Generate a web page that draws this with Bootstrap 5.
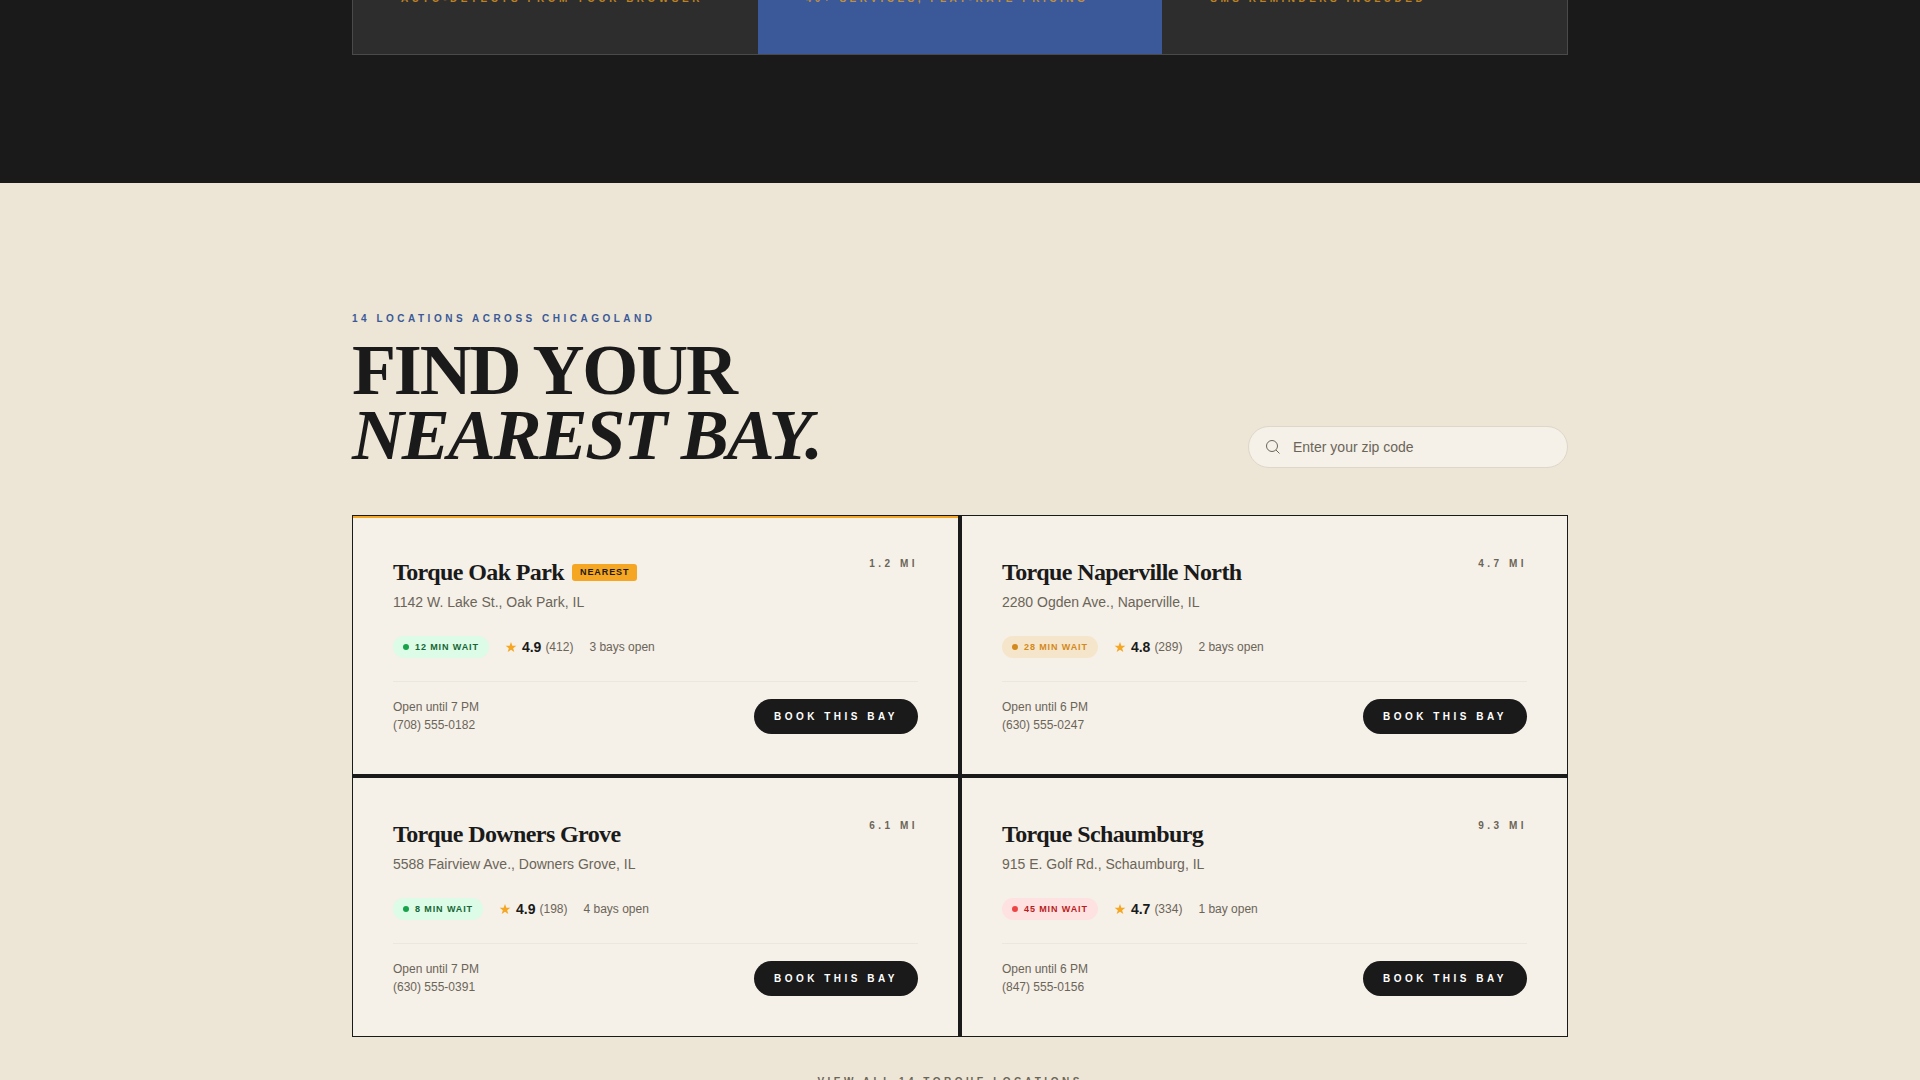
<!DOCTYPE html>
<html lang="en">
<head>
<meta charset="utf-8">
<meta name="viewport" content="width=device-width, initial-scale=1">
<title>Torque – Find your nearest bay</title>
<link href="https://cdn.jsdelivr.net/npm/bootstrap@5.3.0/dist/css/bootstrap.min.css" rel="stylesheet">
<style>
:root{--ink:#1a1a1a;--cream:#f5f0e8;--sand:#ede6d6;--amber:#f5a623;--blue:#3b5998;--muted-ink:#6b6558}
body{font-family:"Liberation Sans",Arial,sans-serif;color:var(--ink);background:var(--sand);overflow:hidden;height:100vh}
.wrap{max-width:1280px;padding:0 32px;margin:0 auto}
.steps-section{background:var(--ink);margin-top:-9px;padding-bottom:128px}
.steps{border:1px solid #4a4a4a;border-top:0;background:#2d2d2d}
.step{padding:0 48px 48px}
.step.current{background:var(--blue)}
.caps{font-size:10px;line-height:15px;font-weight:700;letter-spacing:.35em;text-transform:uppercase}
.step .caps{color:var(--amber);opacity:.7}
.find-section{padding-top:128px}
.find-head{margin-bottom:47px}
.eyebrow{color:var(--blue);margin-bottom:12px}
.headline{font-family:"Liberation Serif","Times New Roman",serif;font-size:72px;line-height:65px;font-weight:700;letter-spacing:-.03em;text-transform:uppercase}
.zip{width:320px;border:1px solid #ddd7c8;border-radius:21px;background:var(--cream);padding:0 17px;height:42px;gap:13px}
.zip input{border:0;outline:0;background:transparent;font-size:14px;line-height:20px;padding:0;min-width:0;color:var(--ink)}
.zip input::placeholder{color:var(--muted-ink);opacity:1}
.bays{display:grid;grid-template-columns:1fr 1fr;gap:4px;background:var(--ink);border:1px solid var(--ink)}
.bay{background:var(--cream);padding:40px;position:relative}
.bay.closest::before{content:"";position:absolute;left:0;right:0;top:0;height:2px;background:var(--amber)}
.bay-name{font-family:"Liberation Serif","Times New Roman",serif;font-size:24px;line-height:32px;font-weight:700;letter-spacing:-.025em}
.tag{font-size:9px;line-height:13px;font-weight:700;letter-spacing:.1em;background:var(--amber);border-radius:3px;padding:2px 8px}
.addr{font-size:14px;line-height:20px;color:var(--muted-ink)}
.dist{color:var(--muted-ink)}
.wait{font-size:9px;line-height:14px;font-weight:700;letter-spacing:.1em;border-radius:11px;padding:4px 10px;gap:6px}
.wait i{width:6px;height:6px;border-radius:50%;background:currentColor}
.wait-short{background:#dcfce7;color:#166534}.wait-short i{background:#16a34a}
.wait-mid{background:#f5e6cb;color:#d4891c}
.wait-long{background:#fee2e2;color:#b91c1c}.wait-long i{background:#ef4444}
.stats{gap:16px;margin-top:24px;font-size:12px;line-height:20px;color:var(--muted-ink)}
.score{font-size:14px;color:var(--ink)}
.foot{border-top:1px solid #ebe6de;margin-top:23px;padding-top:16px;font-size:12px;line-height:18px;color:var(--muted-ink)}
.foot a{color:inherit;text-decoration:none}
.book{background:var(--ink);color:#fff;border:0;border-radius:18px;padding:10px 20px}
.all-row{margin-top:37px}
.all-link{color:var(--muted-ink);text-decoration:none}
</style>
</head>
<body>
<section class="steps-section">
  <div class="wrap">
    <div class="steps row row-cols-3 g-0">
      <div class="col step"><div class="caps">Auto-detects from your browser</div></div>
      <div class="col step current"><div class="caps">40+ services, flat-rate pricing</div></div>
      <div class="col step"><div class="caps">SMS reminders included</div></div>
    </div>
  </div>
</section>
<section class="find-section">
  <div class="wrap">
    <div class="find-head d-flex justify-content-between align-items-end">
      <div>
        <div class="caps eyebrow">14 locations across Chicagoland</div>
        <h2 class="headline mb-0">Find your<br><em>nearest bay.</em></h2>
      </div>
      <div class="zip d-flex align-items-center">
        <svg width="14" height="14" viewBox="0 0 14 14" fill="none" stroke="#6b6558" aria-hidden="true"><circle cx="6" cy="6" r="5.5"/><path d="M10 10l3.500 3.500"/></svg>
        <input class="flex-grow-1" type="text" aria-label="Zip code" placeholder="Enter your zip code">
      </div>
    </div>
    <div class="bays">
      <article class="bay closest">
        <div class="d-flex justify-content-between">
          <div><div class="d-flex align-items-center gap-2 mb-1"><h3 class="bay-name mb-0">Torque Oak Park</h3><span class="tag">NEAREST</span></div><div class="addr">1142 W. Lake St., Oak Park, IL</div></div>
          <div class="caps dist">1.2 mi</div>
        </div>
        <div class="stats d-flex align-items-center"><span class="wait wait-short d-flex align-items-center"><i></i>12 MIN WAIT</span><span class="d-flex align-items-center gap-1"><svg width="13" height="13" viewBox="1 1 26 26" fill="#f5a623" aria-hidden="true"><path d="M13 3l2.700 7.500h8l-6.400 4.900 2.300 7.800-6.600-4.600-6.600 4.600 2.300-7.800-6.400-4.900h8z"/></svg><b class="score">4.9</b><span>(412)</span></span><span>3 bays open</span></div>
        <div class="foot d-flex justify-content-between align-items-center"><div>Open until 7 PM<br><a href="tel:7085550182">(708) 555-0182</a></div><button type="button" class="book caps">Book this bay</button></div>
      </article>
      <article class="bay">
        <div class="d-flex justify-content-between">
          <div><h3 class="bay-name mb-1">Torque Naperville North</h3><div class="addr">2280 Ogden Ave., Naperville, IL</div></div>
          <div class="caps dist">4.7 mi</div>
        </div>
        <div class="stats d-flex align-items-center"><span class="wait wait-mid d-flex align-items-center"><i></i>28 MIN WAIT</span><span class="d-flex align-items-center gap-1"><svg width="13" height="13" viewBox="1 1 26 26" fill="#f5a623" aria-hidden="true"><path d="M13 3l2.700 7.500h8l-6.400 4.900 2.300 7.800-6.600-4.600-6.600 4.600 2.300-7.800-6.400-4.900h8z"/></svg><b class="score">4.8</b><span>(289)</span></span><span>2 bays open</span></div>
        <div class="foot d-flex justify-content-between align-items-center"><div>Open until 6 PM<br><a href="tel:6305550247">(630) 555-0247</a></div><button type="button" class="book caps">Book this bay</button></div>
      </article>
      <article class="bay">
        <div class="d-flex justify-content-between">
          <div><h3 class="bay-name mb-1">Torque Downers Grove</h3><div class="addr">5588 Fairview Ave., Downers Grove, IL</div></div>
          <div class="caps dist">6.1 mi</div>
        </div>
        <div class="stats d-flex align-items-center"><span class="wait wait-short d-flex align-items-center"><i></i>8 MIN WAIT</span><span class="d-flex align-items-center gap-1"><svg width="13" height="13" viewBox="1 1 26 26" fill="#f5a623" aria-hidden="true"><path d="M13 3l2.700 7.500h8l-6.400 4.900 2.300 7.800-6.600-4.600-6.600 4.600 2.300-7.800-6.400-4.900h8z"/></svg><b class="score">4.9</b><span>(198)</span></span><span>4 bays open</span></div>
        <div class="foot d-flex justify-content-between align-items-center"><div>Open until 7 PM<br><a href="tel:6305550391">(630) 555-0391</a></div><button type="button" class="book caps">Book this bay</button></div>
      </article>
      <article class="bay">
        <div class="d-flex justify-content-between">
          <div><h3 class="bay-name mb-1">Torque Schaumburg</h3><div class="addr">915 E. Golf Rd., Schaumburg, IL</div></div>
          <div class="caps dist">9.3 mi</div>
        </div>
        <div class="stats d-flex align-items-center"><span class="wait wait-long d-flex align-items-center"><i></i>45 MIN WAIT</span><span class="d-flex align-items-center gap-1"><svg width="13" height="13" viewBox="1 1 26 26" fill="#f5a623" aria-hidden="true"><path d="M13 3l2.700 7.500h8l-6.400 4.900 2.300 7.800-6.600-4.600-6.600 4.600 2.300-7.800-6.400-4.900h8z"/></svg><b class="score">4.7</b><span>(334)</span></span><span>1 bay open</span></div>
        <div class="foot d-flex justify-content-between align-items-center"><div>Open until 6 PM<br><a href="tel:8475550156">(847) 555-0156</a></div><button type="button" class="book caps">Book this bay</button></div>
      </article>
    </div>
    <div class="all-row caps text-center"><a href="#" class="all-link">View all 14 Torque locations →</a></div>
  </div>
</section>
<script src="https://cdn.jsdelivr.net/npm/bootstrap@5.3.0/dist/js/bootstrap.bundle.min.js"></script>
</body>
</html>
